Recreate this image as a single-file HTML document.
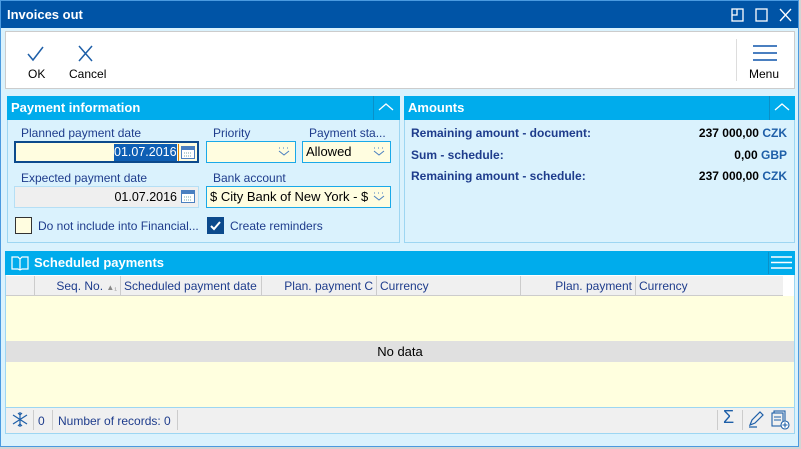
<!DOCTYPE html><html><head><style>
*{box-sizing:border-box;margin:0;padding:0}
body{width:801px;height:449px;background:#d4d4d4;font-family:"Liberation Sans",sans-serif;font-size:12px;position:relative;overflow:hidden}
.a{position:absolute}
.lbl{color:#1e3c8c;font-size:12px}
.in{position:absolute;background:#fffde0;border:1px solid #1aa9e8;height:22px;font-size:13px;line-height:20px;white-space:nowrap;overflow:hidden}
.hdr{position:absolute;background:#00acec;color:#fff;font-weight:bold;font-size:13px;height:24px;line-height:24px;padding-left:4px}
.gh{position:absolute;top:0;height:20px;line-height:20px;color:#1e3c8c;border-right:1px solid #ccc;font-size:12px;white-space:nowrap;overflow:hidden}
</style></head><body>
<div class="a" style="left:0;top:0;width:799px;height:447px;background:#daf2fd;border:1px solid #4a9ae0"></div>
<div class="a" style="left:1px;top:1px;width:797px;height:27px;background:#0054a6;color:#fff;font-weight:bold;font-size:13px;line-height:27px;padding-left:6px">Invoices out</div>
<svg class="a" style="left:728px;top:7px" width="68" height="16" fill="none" stroke="#fff" stroke-width="1.3"><rect x="4" y="2" width="11" height="12"/><path d="M4 8h5V2"/><rect x="28" y="2" width="11" height="12"/><path d="M52 2l11 12M63 2l-11 12"/></svg>
<div class="a" style="left:5px;top:31px;width:790px;height:58px;background:#fff;border:1px solid #ccc"></div>
<svg class="a" style="left:26px;top:44px" width="80" height="20" fill="none" stroke="#1e5fa8" stroke-width="1.5"><path d="M2 10l5 6L17 3"/><path d="M53 2l13 15M66 2L53 17"/></svg>
<div class="a" style="left:28px;top:67px;font-size:12px">OK</div>
<div class="a" style="left:69px;top:67px;font-size:12px">Cancel</div>
<div class="a" style="left:736px;top:39px;width:1px;height:42px;background:#ddd"></div>
<svg class="a" style="left:752px;top:44px" width="26" height="18" stroke="#4a7fc0" stroke-width="2"><path d="M1 2h24M1 9h24M1 16h24"/></svg>
<div class="a" style="left:749px;top:67px;font-size:12px">Menu</div>

<div class="a" style="left:7px;top:96px;width:393px;height:147px;border:1px solid #9dd6f2"></div>
<div class="hdr" style="left:7px;top:96px;width:393px">Payment information</div>
<div class="a" style="left:373px;top:96px;width:1px;height:24px;background:#0a90c8"></div>
<svg class="a" style="left:377px;top:101px" width="18" height="12" fill="none" stroke="#fff" stroke-width="1.3"><path d="M2 9l7-6 7 6"/></svg>
<div class="a lbl" style="left:21px;top:126px">Planned payment date</div>
<div class="a lbl" style="left:213px;top:126px">Priority</div>
<div class="a lbl" style="left:309px;top:126px">Payment sta...</div>
<div class="in" style="left:14px;top:141px;width:185px;border:2px solid #0c4a8c"></div>
<div class="a" style="left:114px;top:144px;width:63px;height:17px;background:#0e5fb4;color:#fff;font-size:12.5px;line-height:17px;white-space:nowrap;overflow:hidden">01.07.2016</div>
<div class="a" style="left:178px;top:144px;width:1px;height:17px;background:#e08000"></div>
<svg class="a" style="left:181px;top:146px" width="14" height="13"><rect x="0.5" y="0.5" width="13" height="12" fill="#fff" stroke="#4a7fc0"/><rect x="1" y="1" width="12" height="3" fill="#4a7fc0"/><path d="M3 7h8M3 10h8" stroke="#7aa" stroke-dasharray="1 1"/></svg>
<div class="in" style="left:206px;top:141px;width:90px"></div>
<div class="in" style="left:302px;top:141px;width:89px;padding-left:3px">Allowed</div>
<div class="a lbl" style="left:21px;top:171px">Expected payment date</div>
<div class="a lbl" style="left:213px;top:171px">Bank account</div>
<div class="in" style="left:14px;top:186px;width:185px;background:#efefef;border-color:#b5dff5;text-align:right;padding-right:21px;font-size:12.5px">01.07.2016</div>
<svg class="a" style="left:181px;top:190px" width="14" height="13"><rect x="0.5" y="0.5" width="13" height="12" fill="#fff" stroke="#4a7fc0"/><rect x="1" y="1" width="12" height="3" fill="#4a7fc0"/><path d="M3 7h8M3 10h8" stroke="#7aa" stroke-dasharray="1 1"/></svg>
<div class="in" style="left:206px;top:186px;width:185px;padding-left:3px;padding-right:20px">$ City Bank of New York - $</div>
<svg class="a" style="left:278px;top:147px" width="12" height="10" fill="none" stroke="#4a7fc0"><path d="M1 1h1M5 1h1M9 1h1M1 4l5 4 5-4"/></svg>
<svg class="a" style="left:373px;top:147px" width="12" height="10" fill="none" stroke="#4a7fc0"><path d="M1 1h1M5 1h1M9 1h1M1 4l5 4 5-4"/></svg>
<svg class="a" style="left:373px;top:192px" width="12" height="10" fill="none" stroke="#4a7fc0"><path d="M1 1h1M5 1h1M9 1h1M1 4l5 4 5-4"/></svg>
<div class="a" style="left:15px;top:217px;width:17px;height:17px;background:#fffde0;border:1px solid #333"></div>
<div class="a lbl" style="left:38px;top:219px">Do not include into Financial...</div>
<div class="a" style="left:207px;top:217px;width:17px;height:17px;background:#0c4a8c"></div>
<svg class="a" style="left:209px;top:219px" width="13" height="13" fill="none" stroke="#fff" stroke-width="2"><path d="M2 7l3 3 6-7"/></svg>
<div class="a lbl" style="left:230px;top:219px">Create reminders</div>

<div class="a" style="left:404px;top:96px;width:391px;height:147px;border:1px solid #9dd6f2"></div>
<div class="hdr" style="left:404px;top:96px;width:391px">Amounts</div>
<div class="a" style="left:769px;top:96px;width:1px;height:24px;background:#0a90c8"></div>
<svg class="a" style="left:773px;top:101px" width="18" height="12" fill="none" stroke="#fff" stroke-width="1.3"><path d="M2 9l7-6 7 6"/></svg>
<div class="a lbl" style="left:411px;top:126px;font-weight:bold">Remaining amount - document:</div>
<div class="a lbl" style="left:411px;top:148px;font-weight:bold">Sum - schedule:</div>
<div class="a lbl" style="left:411px;top:169px;font-weight:bold">Remaining amount - schedule:</div>
<div class="a" style="right:14px;top:126px;font-weight:bold;font-size:12px">237 000,00 <span style="color:#1e5fa8">CZK</span></div>
<div class="a" style="right:14px;top:148px;font-weight:bold;font-size:12px">0,00 <span style="color:#1e5fa8">GBP</span></div>
<div class="a" style="right:14px;top:169px;font-weight:bold;font-size:12px">237 000,00 <span style="color:#1e5fa8">CZK</span></div>

<div class="a" style="left:5px;top:251px;width:790px;height:183px;border:1px solid #9dd6f2;background:#fff"></div>
<div class="hdr" style="left:5px;top:251px;width:790px;padding-left:29px">Scheduled payments</div>
<svg class="a" style="left:11px;top:255px" width="18" height="17" fill="none" stroke="#fff" stroke-width="1.2"><path d="M1 2h6l2 2 2-2h6v12h-6l-2 1-2-1H1z M9 4v11"/></svg>
<div class="a" style="left:768px;top:252px;width:1px;height:22px;background:#0a90c8"></div>
<svg class="a" style="left:771px;top:255px" width="21" height="15" stroke="#fff" stroke-width="1.4"><path d="M0 2h21M0 7.5h21M0 13h21"/></svg>
<div class="a" style="left:6px;top:276px;width:777px;height:20px;background:#f0f0f0;border-bottom:1px solid #ccc">
<div class="gh" style="left:0;width:29px"></div>
<div class="gh" style="left:29px;width:86px;text-align:right;padding-right:3px">Seq. No. <span style="font-size:8px;color:#888">▲₁</span></div>
<div class="gh" style="left:115px;width:141px;padding-left:3px">Scheduled payment date</div>
<div class="gh" style="left:256px;width:115px;text-align:right;padding-right:3px">Plan. payment C</div>
<div class="gh" style="left:371px;width:144px;padding-left:3px">Currency</div>
<div class="gh" style="left:515px;width:115px;text-align:right;padding-right:3px">Plan. payment</div>
<div class="gh" style="left:630px;width:147px;padding-left:3px;border-right:0">Currency</div>
</div>
<div class="a" style="left:6px;top:296px;width:788px;height:112px;background:#ffffdf"></div>
<div class="a" style="left:6px;top:341px;width:788px;height:21px;background:#e0e0e0;text-align:center;line-height:21px;font-size:13px">No data</div>
<div class="a" style="left:6px;top:407px;width:788px;height:26px;background:#f0f0f0;border-top:1px solid #9dd6f2"></div>
<div class="a" style="left:33px;top:410px;width:1px;height:20px;background:#ccc"></div>
<div class="a" style="left:52px;top:410px;width:1px;height:20px;background:#ccc"></div>
<div class="a" style="left:177px;top:410px;width:1px;height:20px;background:#ccc"></div>
<div class="a" style="left:717px;top:410px;width:1px;height:20px;background:#ccc"></div>
<div class="a" style="left:742px;top:410px;width:1px;height:20px;background:#ccc"></div>
<svg class="a" style="left:12px;top:411px" width="16" height="17" stroke="#1e5fa8" stroke-width="1.2" fill="none"><path d="M8 1v15M1 4l14 9M15 4L1 13M6 2l2 2 2-2M6 15l2-2 2 2"/></svg>
<div class="a lbl" style="left:38px;top:414px">0</div>
<div class="a lbl" style="left:58px;top:414px">Number of records: 0</div>
<div class="a" style="left:723px;top:407px;color:#1e5fa8;font-size:18px">Σ</div>
<svg class="a" style="left:748px;top:411px" width="16" height="17" stroke="#1e5fa8" stroke-width="1.2" fill="none"><path d="M2 14l2-5 8-8 3 3-8 8zM1 16h8"/></svg>
<svg class="a" style="left:771px;top:410px" width="20" height="20" stroke="#1e5fa8" stroke-width="1.1" fill="none"><rect x="3" y="1" width="11" height="13"/><rect x="1" y="3" width="11" height="13" fill="#f0f0f0"/><path d="M3 7h7M3 10h7"/><circle cx="14" cy="15" r="4" fill="#fff"/><path d="M14 12.5v5M11.5 15h5"/></svg>
</body></html>
